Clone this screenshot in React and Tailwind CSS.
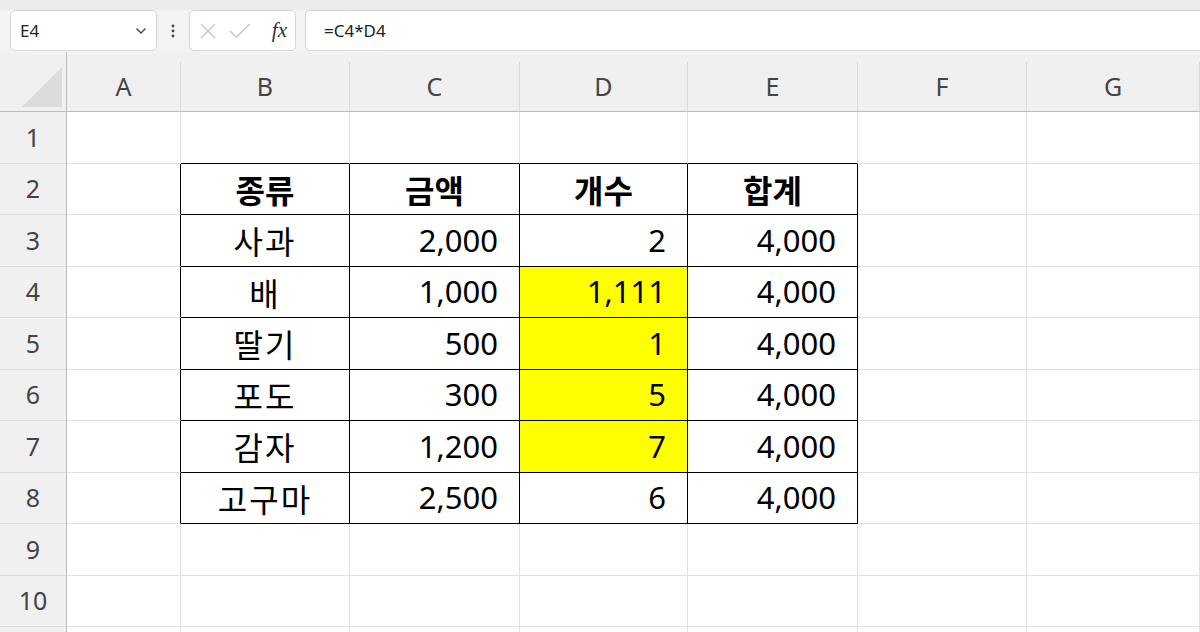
import React from "react";

const cols = ["A", "B", "C", "D", "E", "F", "G"];

const data = {
  2: ["종류", "금액", "개수", "합계"],
  3: ["사과", "2,000", "2", "4,000"],
  4: ["배", "1,000", "1,111", "4,000"],
  5: ["딸기", "500", "1", "4,000"],
  6: ["포도", "300", "5", "4,000"],
  7: ["감자", "1,200", "7", "4,000"],
  8: ["고구마", "2,500", "6", "4,000"],
};

const Cell = ({ r, c }) => {
  const inTable = r >= 2 && r <= 8 && c >= 1 && c <= 4;
  const blackRight = r >= 2 && r <= 8 && c >= 0 && c <= 4;
  const blackBottom = (r === 1 || (r >= 2 && r <= 8)) && c >= 1 && c <= 4;
  const yellow = c === 3 && r >= 4 && r <= 7;
  const val = inTable ? data[r][c - 1] : "";
  const isHead = r === 2;
  const isLabel = c === 1;
  return (
    <div
      className={
        "flex items-center h-[51.5px] border-r border-b text-black leading-none " +
        (blackRight ? "border-r-black " : "border-r-[#e1e1e1] ") +
        (blackBottom ? "border-b-black " : "border-b-[#e1e1e1] ") +
        (yellow ? "bg-[#ffff00] " : "bg-white ") +
        (isHead
          ? "justify-center font-bold text-[32px] "
          : isLabel
          ? "justify-center text-[32px] tracking-[2px] "
          : "justify-end pr-[21px] text-[31px] font-['Noto_Sans',sans-serif] ")
      }
    >
      {val}
    </div>
  );
};

export default function App() {
  const rows = Array.from({ length: 10 }, (_, i) => i + 1);
  return (
    <div className="w-[1200px] h-[632px] overflow-hidden bg-white font-['Noto_Sans_CJK_KR','Noto_Sans',sans-serif]">
      {/* formula bar */}
      <div className="h-[52px] bg-[#f3f3f3] border-t-[10px] border-[#ececec] flex items-stretch pb-[1px] font-['Noto_Sans',sans-serif]">
        <div className="flex items-stretch pl-[10px]">
          <div className="w-[147px] bg-white border border-[#d6d6d6] rounded-[5px] flex items-center justify-between px-[9px] text-[17px] text-[#222]">
            <span>E4</span>
            <svg width="12" height="8" viewBox="0 0 12 8">
              <path d="M1.5 1.5 L6 6 L10.5 1.5" fill="none" stroke="#444" strokeWidth="1.4" />
            </svg>
          </div>
          <div className="w-[32px] flex items-center justify-center">
            <svg width="4" height="14" viewBox="0 0 4 14">
              <circle cx="2" cy="2" r="1.4" fill="#444" />
              <circle cx="2" cy="7" r="1.4" fill="#444" />
              <circle cx="2" cy="12" r="1.4" fill="#444" />
            </svg>
          </div>
          <div className="w-[107px] bg-white border border-[#d6d6d6] rounded-[5px] flex items-center pl-[8px] pr-[4px] gap-[10px]">
            <svg width="20" height="20" viewBox="0 0 20 20">
              <path d="M3 3 L17 17 M17 3 L3 17" stroke="#c4c4c4" strokeWidth="1.3" />
            </svg>
            <svg width="24" height="20" viewBox="0 0 24 20">
              <path d="M2 10 L8.5 16 L22 3" fill="none" stroke="#c4c4c4" strokeWidth="1.3" />
            </svg>
            <span className="ml-auto pr-[4px] text-[21px] italic text-[#333] font-['Liberation_Serif',serif]">
              fx
            </span>
          </div>
          <div className="w-[9px]" />
        </div>
        <div className="flex-1 bg-white border border-[#d6d6d6] border-r-0 rounded-l-[5px] flex items-center pl-[18px] text-[17px] text-[#222]">
          =C4*D4
        </div>
      </div>

      {/* sheet */}
      <div className="grid grid-cols-[67px_114px_169px_170px_168px_170px_169px_1fr]">
        {/* header row */}
        <div className="h-[60px] bg-[#f0f0f0] border-r border-b border-r-[#bdbdbd] border-b-[#bdbdbd] flex items-end justify-end pr-[4px] pb-[4px]">
          <svg width="40" height="40" viewBox="0 0 40 40">
            <polygon points="40,0 40,40 0,40" fill="#dcdcdc" />
          </svg>
        </div>
        {cols.map((c) => (
          <div key={c} className="h-[60px] bg-[#f0f0f0] border-b border-b-[#bdbdbd] pt-[10px]">
            <div className="h-full border-r border-r-[#dadada] flex items-center justify-center text-[25px] text-[#444] font-['Noto_Sans',sans-serif]">
              {c}
            </div>
          </div>
        ))}

        {rows.map((r) => (
          <React.Fragment key={r}>
            <div className="h-[51.5px] bg-[#f0f0f0] border-r border-r-[#bdbdbd] border-b border-b-[#dadada] flex items-center justify-center text-[25px] text-[#444] font-['Noto_Sans',sans-serif]">
              {r}
            </div>
            {cols.map((c, i) => (
              <Cell key={c} r={r} c={i} />
            ))}
          </React.Fragment>
        ))}
        {/* partly visible row 11 */}
        <div className="h-[51.5px] bg-[#f0f0f0] border-r border-r-[#bdbdbd]" />
        {cols.map((c) => (
          <div key={c} className="h-[51.5px] bg-white border-r border-r-[#e1e1e1]" />
        ))}
      </div>
    </div>
  );
}
